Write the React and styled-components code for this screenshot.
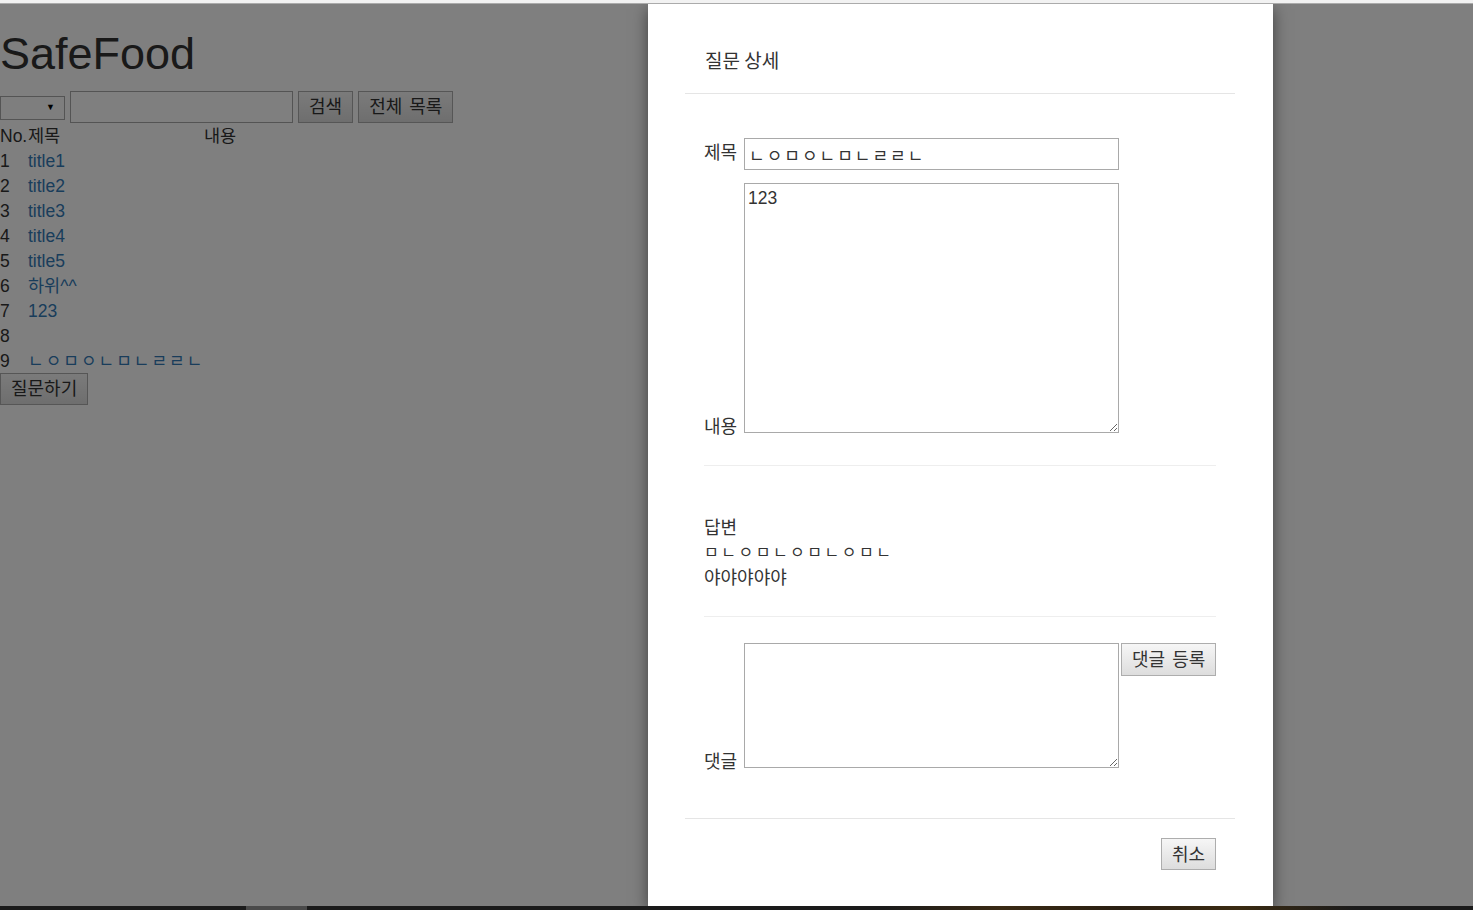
import React from "react";
import styled, { createGlobalStyle } from "styled-components";

const GlobalStyle = createGlobalStyle`
  html, body {
    margin: 0;
    padding: 0;
    overflow: hidden;
  }
  body {
    font-family: "Liberation Sans", Arial, "Noto Sans CJK KR", sans-serif;
    font-size: 17.5px;
    line-height: 25px;
    color: #333;
    background: #fff;
  }
  * {
    box-sizing: border-box;
  }
`;

const Frame = styled.div`
  display: flex;
  flex-direction: column;
  width: 1473px;
  height: 910px;
`;

const TopStrip = styled.div`
  height: 4px;
  flex: none;
  background: #f2f2f2;
  border-bottom: 1px solid #ababab;
`;

const Taskbar = styled.div`
  height: 4px;
  flex: none;
  display: flex;
  background: linear-gradient(
    90deg,
    #1b1b1b 0%,
    #1b1b1b 60%,
    #3a2a14 68%,
    #2a1f12 76%,
    #3b2b12 84%,
    #1b1b1b 92%
  );
`;

const TaskItem = styled.div`
  margin-left: 246px;
  width: 61px;
  background: #4a4a4a;
`;

const Viewport = styled.div`
  flex: 1;
  position: relative;
  overflow: hidden;
`;

const Page = styled.div`
  padding: 0;
`;

const Title = styled.h1`
  font-family: "Liberation Sans", Arial, sans-serif;
  font-size: 45px;
  font-weight: 400;
  line-height: 49.5px;
  margin: 25px 0 12px;
  color: #333;
`;

const SearchBar = styled.div`
  display: flex;
  align-items: center;
  gap: 5px;
  height: 32px;
`;

const SelectBox = styled.div`
  width: 65px;
  height: 24px;
  margin-top: 2px;
  display: flex;
  align-items: center;
  justify-content: flex-end;
  padding-right: 9px;
  border: 1px solid #a9a9a9;
  background: #fdfdfd;
  font-size: 9px;
  color: #000;
`;

const SearchInput = styled.input`
  width: 223px;
  height: 32px;
  border: 1px solid #a9a9a9;
  background: #fff;
  font: inherit;
  padding: 2px 4px;
  outline: none;
`;

const Button = styled.button`
  height: ${(p) => p.$h || 32}px;
  padding: 0 10px 3px;
  border: 1px solid #adadad;
  background: linear-gradient(#f6f6f6, #dddddd);
  font-family: "Noto Sans CJK KR", "Liberation Sans", sans-serif;
  font-size: 18px;
  word-spacing: 3px;
  white-space: nowrap;
  color: #333;
  line-height: 1;
  cursor: pointer;
`;

const List = styled.div`
  display: grid;
  grid-template-columns: 28px 176px auto;
  margin-top: 1px;
`;

const Cell = styled.div`
  height: 25px;
  line-height: 25px;
  font-family: "Liberation Sans", Arial, "Noto Sans CJK KR", sans-serif;
  white-space: nowrap;
`;

const Link = styled.a`
  color: #337ab7;
  text-decoration: none;
  font-size: ${(p) => (p.$jamo ? "17px" : "inherit")};
  letter-spacing: ${(p) => (p.$jamo ? "2px" : "0")};
`;

const AskRow = styled.div`
  margin-top: -1px;
`;

const Backdrop = styled.div`
  position: absolute;
  inset: 0;
  background: rgba(0, 0, 0, 0.5);
`;

const Modal = styled.div`
  position: absolute;
  top: 0;
  left: 648px;
  width: 625px;
  bottom: 0;
  background: #fff;
  padding: 0 38px 0 37px;
  box-shadow: 0 5px 15px rgba(0, 0, 0, 0.5);
  font-family: "Noto Sans CJK KR", "Liberation Sans", sans-serif;
`;

const ModalHeader = styled.div`
  padding: 42px 20px 20px;
  border-bottom: 1px solid #e5e5e5;
`;

const ModalTitle = styled.h4`
  margin: 0;
  font-size: 19px;
  font-weight: 400;
  line-height: 27px;
  color: #333;
`;

const ModalBody = styled.div`
  padding: 0 19px 50px;
`;

const Section = styled.div`
  padding: ${(p) => p.$pad};
  border-bottom: ${(p) => (p.$line ? "1px solid #eee" : "none")};
`;

const FieldRow = styled.div`
  display: flex;
  align-items: ${(p) => p.$align || "flex-end"};
  gap: 6px;
  & + & {
    margin-top: 13px;
  }
`;

const Label = styled.label`
  width: 34px;
  flex: none;
  font-size: 18px;
  line-height: 20px;
  margin-bottom: ${(p) => p.$mb ?? -2}px;
  color: #333;
  white-space: nowrap;
`;

const TextInput = styled.input`
  width: 375px;
  height: 32px;
  flex: none;
  border: 1px solid #a9a9a9;
  padding: 2px 4px;
  font-family: "Noto Sans CJK KR", sans-serif;
  font-size: 17px;
  letter-spacing: 2px;
  color: #333;
  outline: none;
`;

const TextArea = styled.textarea`
  width: 375px;
  height: ${(p) => p.$h}px;
  flex: none;
  border: 1px solid #a9a9a9;
  padding: 3px 3px;
  font-family: "Liberation Sans", Arial, sans-serif;
  font-size: 17.5px;
  line-height: 22px;
  color: #333;
  resize: vertical;
  outline: none;
  display: block;
`;

const Line = styled.div`
  font-size: ${(p) => p.$size || 18}px;
  letter-spacing: ${(p) => (p.$jamo ? "2.5px" : "0")};
  line-height: 25px;
  color: #333;
`;

const Side = styled.div`
  align-self: flex-start;
  flex: none;
  margin-left: -4px;
`;

const ModalFooter = styled.div`
  display: flex;
  justify-content: flex-end;
  padding: 19px 19px;
  border-top: 1px solid #e5e5e5;
`;

const rows = [
  { no: 1, title: "title1" },
  { no: 2, title: "title2" },
  { no: 3, title: "title3" },
  { no: 4, title: "title4" },
  { no: 5, title: "title5" },
  { no: 6, title: "하위^^" },
  { no: 7, title: "123" },
  { no: 8, title: "" },
  { no: 9, title: "ㄴㅇㅁㅇㄴㅁㄴㄹㄹㄴ", jamo: true },
];

export default function App() {
  return (
    <Frame>
      <GlobalStyle />
      <TopStrip />
      <Viewport>
        <Page>
          <Title>SafeFood</Title>
          <SearchBar>
            <SelectBox>▼</SelectBox>
            <SearchInput type="text" />
            <Button>검색</Button>
            <Button>전체 목록</Button>
          </SearchBar>
          <List>
            <Cell>No.</Cell>
            <Cell>제목</Cell>
            <Cell>내용</Cell>
            {rows.map((r) => (
              <React.Fragment key={r.no}>
                <Cell>{r.no}</Cell>
                <Cell>
                  <Link href="#" $jamo={r.jamo}>
                    {r.title}
                  </Link>
                </Cell>
                <Cell />
              </React.Fragment>
            ))}
          </List>
          <AskRow>
            <Button>질문하기</Button>
          </AskRow>
        </Page>
        <Backdrop />
        <Modal>
          <ModalHeader>
            <ModalTitle>질문 상세</ModalTitle>
          </ModalHeader>
          <ModalBody>
            <Section $line $pad="44px 0 32px">
              <FieldRow $align="center">
                <Label $mb={6}>제목</Label>
                <TextInput type="text" defaultValue="ㄴㅇㅁㅇㄴㅁㄴㄹㄹㄴ" />
              </FieldRow>
              <FieldRow>
                <Label>내용</Label>
                <TextArea $h={250} defaultValue="123" />
              </FieldRow>
            </Section>
            <Section $line $pad="48px 0 27px">
              <Line>답변</Line>
              <Line $size={16} $jamo>
                ㅁㄴㅇㅁㄴㅇㅁㄴㅇㅁㄴ
              </Line>
              <Line>야야야야야</Line>
            </Section>
            <Section $pad="26px 0 0">
              <FieldRow>
                <Label>댓글</Label>
                <TextArea $h={125} />
                <Side>
                  <Button $h={33}>댓글 등록</Button>
                </Side>
              </FieldRow>
            </Section>
          </ModalBody>
          <ModalFooter>
            <Button>취소</Button>
          </ModalFooter>
        </Modal>
      </Viewport>
      <Taskbar>
        <TaskItem />
      </Taskbar>
    </Frame>
  );
}
